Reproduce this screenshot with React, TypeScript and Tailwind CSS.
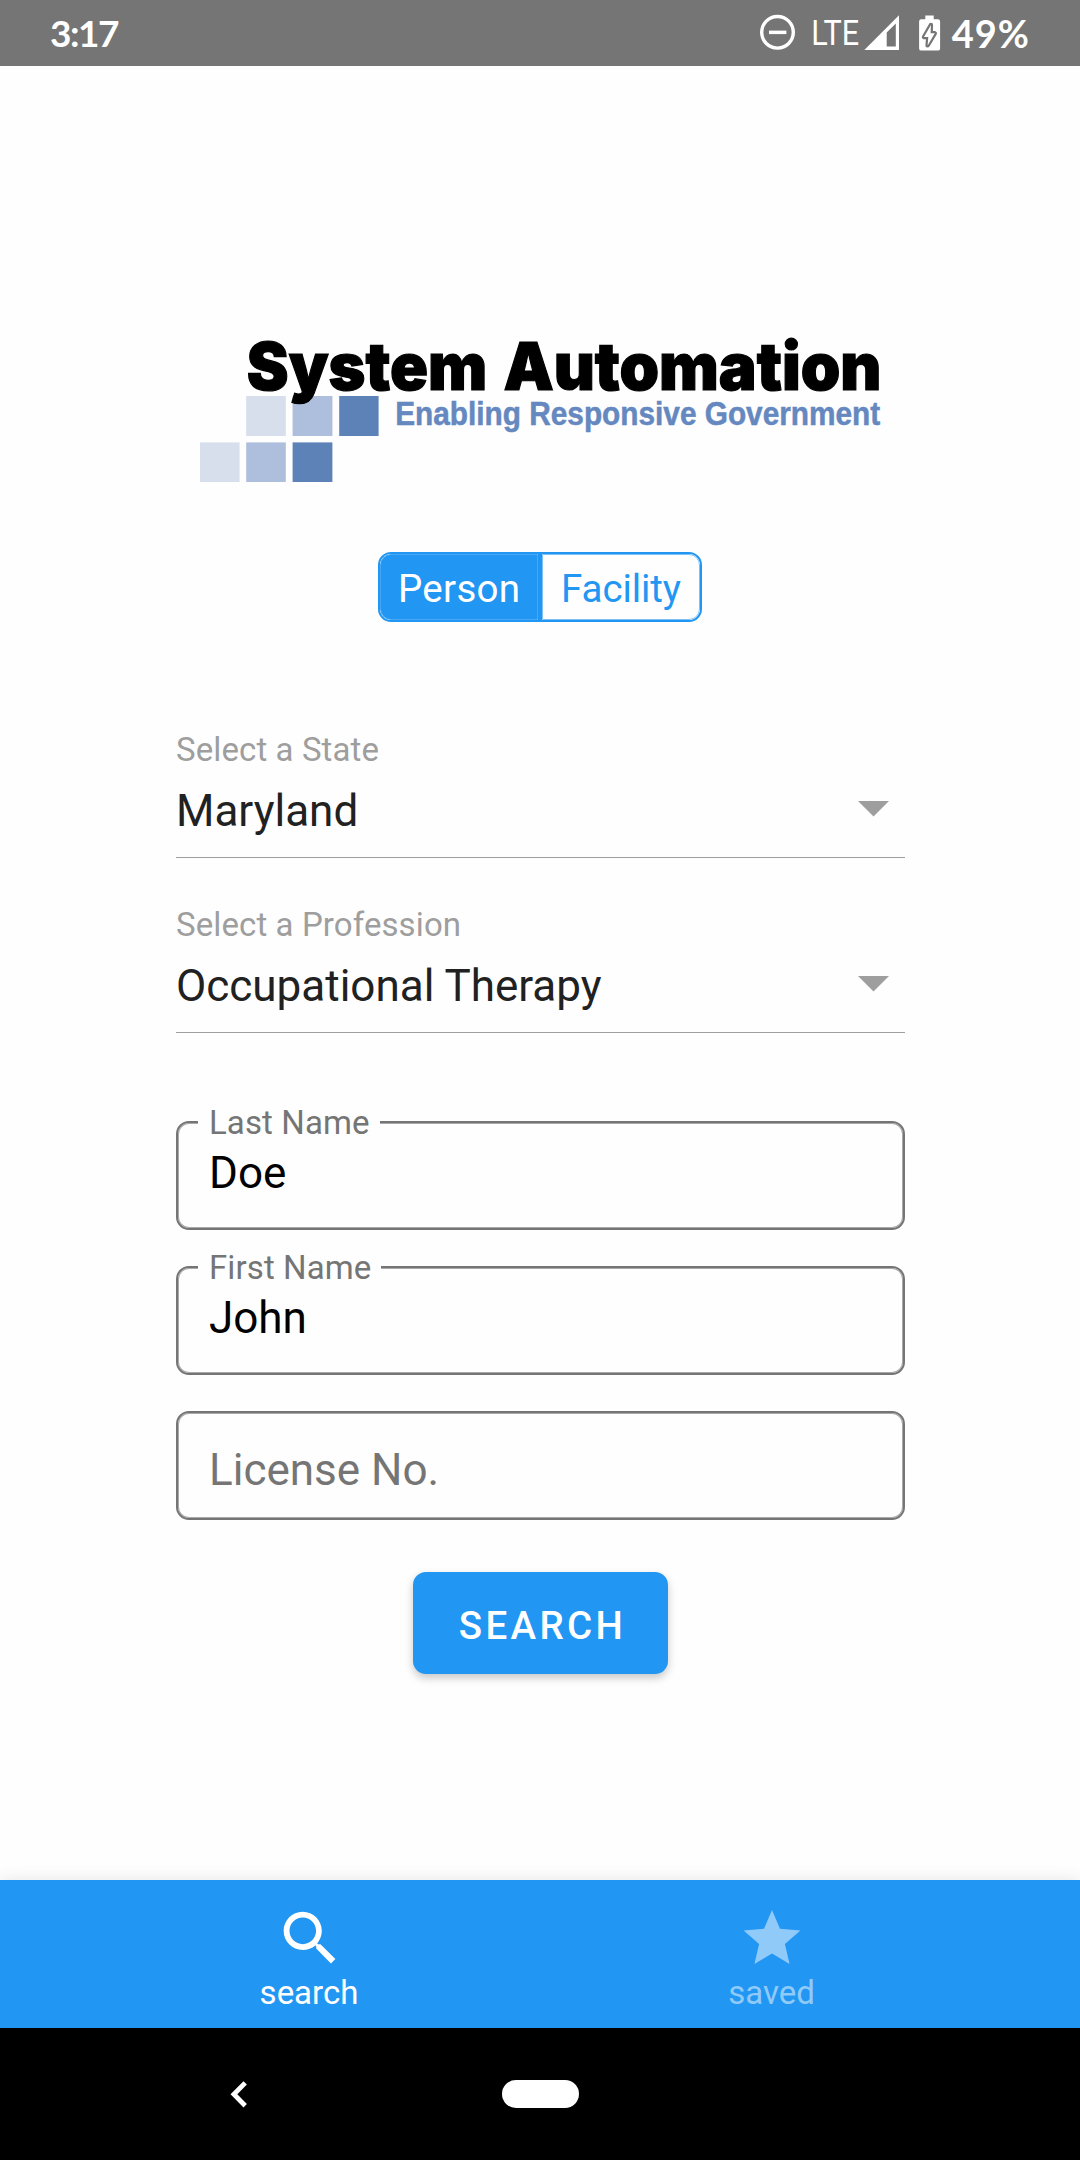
import { useState } from 'react';
import { IoMdSearch, IoMdStar } from 'react-icons/io';

function StatusBar() {
  return (
    <div className="flex h-[66px] shrink-0 items-start justify-between bg-[#757575] pl-[50px] pr-[50px] text-white">
      <span className="pt-[8px] font-['Lato',sans-serif] text-[37px] font-bold leading-[50px] tracking-[-1.5px]">
        3:17
      </span>
      <div className="flex items-start">
        <svg width="190" height="66" viewBox="756 0 190 66" fill="#fff">
          <circle cx="777.5" cy="32.3" r="15.8" fill="none" stroke="#fff" strokeWidth="3.4" />
          <rect x="769" y="30.6" width="17.4" height="3.5" />
          <text
            x="811.2"
            y="44.6"
            fontFamily="Roboto, sans-serif"
            fontSize="34.5"
            fontWeight="400"
            textLength="48"
            lengthAdjust="spacingAndGlyphs"
          >
            LTE
          </text>
          <path
            fillRule="evenodd"
            d="M864.3 50L899 15.3V50ZM886.7 46.6V32.5L895.8 23.4V46.6Z"
          />
          <path d="M925.3 15.5h8.4v3.7h4.2q2.2 0 2.2 2.2v27q0 2.2 -2.2 2.2h-16.6q-2.2 0 -2.2 -2.2v-27q0 -2.2 2.2 -2.2h4z" />
          <path
            d="M930.9 25L924 37H928.3L927.6 45.4L934.8 33.3H930.6Z"
            stroke="#757575"
            strokeWidth="4.4"
            strokeLinejoin="round"
          />
          <path d="M930.9 25L924 37H928.3L927.6 45.4L934.8 33.3H930.6Z" />
        </svg>
        <span className="ml-[6px] pt-[8px] font-['Lato',sans-serif] text-[38px] font-bold leading-[50px] tracking-[1px]">
          49%
        </span>
      </div>
    </div>
  );
}

function Logo() {
  return (
    <svg className="ml-[2px]" width="682" height="148" viewBox="200 334 682 148">
      <rect x="246.2" y="396" width="39.6" height="40" fill="#d6dfeb" />
      <rect x="292.6" y="396" width="39.8" height="40" fill="#adbfdc" />
      <rect x="339.2" y="396" width="39.4" height="40" fill="#5d82b7" />
      <rect x="200" y="442.4" width="39.6" height="39.6" fill="#d6dfeb" />
      <rect x="246.2" y="442.4" width="39.6" height="39.6" fill="#adbfdc" />
      <rect x="292.6" y="442.4" width="39.8" height="39.6" fill="#5d82b7" />
      <g fontFamily="Inter, sans-serif" fontSize="66" fontWeight="900" stroke="#000" strokeWidth="1.2">
        <text x="246.8" y="390" textLength="240.5" lengthAdjust="spacingAndGlyphs">
          System
        </text>
        <text x="503.4" y="390" textLength="378" lengthAdjust="spacingAndGlyphs">
          Automation
        </text>
      </g>
      <text
        x="395.2"
        y="425.3"
        fontFamily="Liberation Sans, Arial, sans-serif"
        fontSize="32.4"
        fontWeight="700"
        fill="#6488bf"
        stroke="#6488bf"
        strokeWidth="0.5"
        textLength="485"
        lengthAdjust="spacingAndGlyphs"
      >
        Enabling Responsive Government
      </text>
    </svg>
  );
}

function TypeToggle() {
  const [type, setType] = useState('person');

  return (
    <div className="mt-[70px] flex h-[70px] w-[324px] overflow-hidden rounded-[13px] border-2 border-[#2196f3] text-[38.5px]">
      <button
        onClick={() => setType('person')}
        className={`w-[158px] rounded-l-[11px] border border-[#45a7f5] pl-[17px] pt-[3px] text-left tracking-[0.3px] ${
          type === 'person' ? 'bg-[#2196f3] text-white' : 'text-[#2196f3]'
        }`}
      >
        Person
      </button>
      <div className="w-[4px] bg-[#2196f3]" />
      <button
        onClick={() => setType('facility')}
        className={`flex-1 rounded-r-[11px] border border-[#7cc1f8] pl-[18px] pt-[3px] text-left tracking-[-0.1px] ${
          type === 'facility' ? 'bg-[#2196f3] text-white' : 'text-[#2196f3]'
        }`}
      >
        Facility
      </button>
    </div>
  );
}

function Select({ label, value }: { label: string; value: string }) {
  return (
    <div className="border-b border-[#9e9e9e]">
      <div className="text-[33px] leading-[40px] tracking-[0.1px] text-[#9e9e9e]">{label}</div>
      <div className="mt-[15px] flex h-[72px] items-start justify-between pr-[16px]">
        <span className="text-[44px] leading-[52px] text-[#212121]">{value}</span>
        <svg className="mt-4" width="31" height="16" viewBox="0 0 31 16">
          <path d="M0 0H31L15.5 15.5Z" fill="#9e9e9e" />
        </svg>
      </div>
    </div>
  );
}

function TextField({ label, value }: { label: string; value?: string }) {
  return (
    <div className="relative h-[109px] rounded-[13px] border-2 border-[#757575] pl-[31px] text-[44px] leading-[52px] shadow-[inset_0_0_0_1px_#a9a9a9]">
      {value ? (
        <>
          <span className="absolute left-[20px] top-[-20px] bg-[#fefefe] pl-[11px] pr-[10px] text-[33px] leading-[40px] tracking-[0.1px] text-[#757575]">
            {label}
          </span>
          <div className="pt-6 text-black">{value}</div>
        </>
      ) : (
        <div className="pt-[31px] text-[#757575]">{label}</div>
      )}
    </div>
  );
}

function TabBar() {
  return (
    <nav className="mt-auto flex h-[148px] shrink-0 justify-center bg-[#2196f3] text-[33px] leading-[40px] text-white shadow-[0_0_16px_rgba(0,0,0,0.1)]">
      <a className="flex w-[462px] flex-col items-center pt-[23px]">
        <IoMdSearch size={69} />
        <span className="mt-px">search</span>
      </a>
      <a className="flex w-[462px] flex-col items-center pl-px pt-[21px] text-[#90caf9]">
        <IoMdStar size={72} />
        <span>saved</span>
      </a>
    </nav>
  );
}

function SystemNav() {
  return (
    <div className="flex h-[132px] shrink-0 items-start bg-black">
      <svg className="ml-[230px] mt-[52px]" width="18" height="29" viewBox="0 0 18 29">
        <path d="M15.2 2.9L3.9 14.3L15.2 25.7" fill="none" stroke="#fff" strokeWidth="4.8" />
      </svg>
      <div className="ml-[254px] mt-[52px] h-[28px] w-[77px] rounded-full bg-white" />
    </div>
  );
}

export default function App() {
  return (
    <div className="flex h-[2160px] w-[1080px] flex-col bg-[#fefefe] font-['Roboto',sans-serif]">
      <StatusBar />
      <main className="flex flex-col items-center pt-[268px]">
        <Logo />
        <TypeToggle />
        <div className="ml-px mt-[108px] flex w-[729px] flex-col gap-[47px]">
          <Select label="Select a State" value="Maryland" />
          <Select label="Select a Profession" value="Occupational Therapy" />
        </div>
        <div className="ml-px mt-[88px] flex w-[729px] flex-col gap-9">
          <TextField label="Last Name" value="Doe" />
          <TextField label="First Name" value="John" />
          <TextField label="License No." />
        </div>
        <button className="ml-px mt-[52px] h-[102px] w-[255px] rounded-[13px] bg-[#2196f3] pl-[4px] pt-[5px] text-[38.5px] font-medium tracking-[3.35px] text-white shadow-[0_4px_8px_rgba(0,0,0,0.22)]">
          SEARCH
        </button>
      </main>
      <TabBar />
      <SystemNav />
    </div>
  );
}
